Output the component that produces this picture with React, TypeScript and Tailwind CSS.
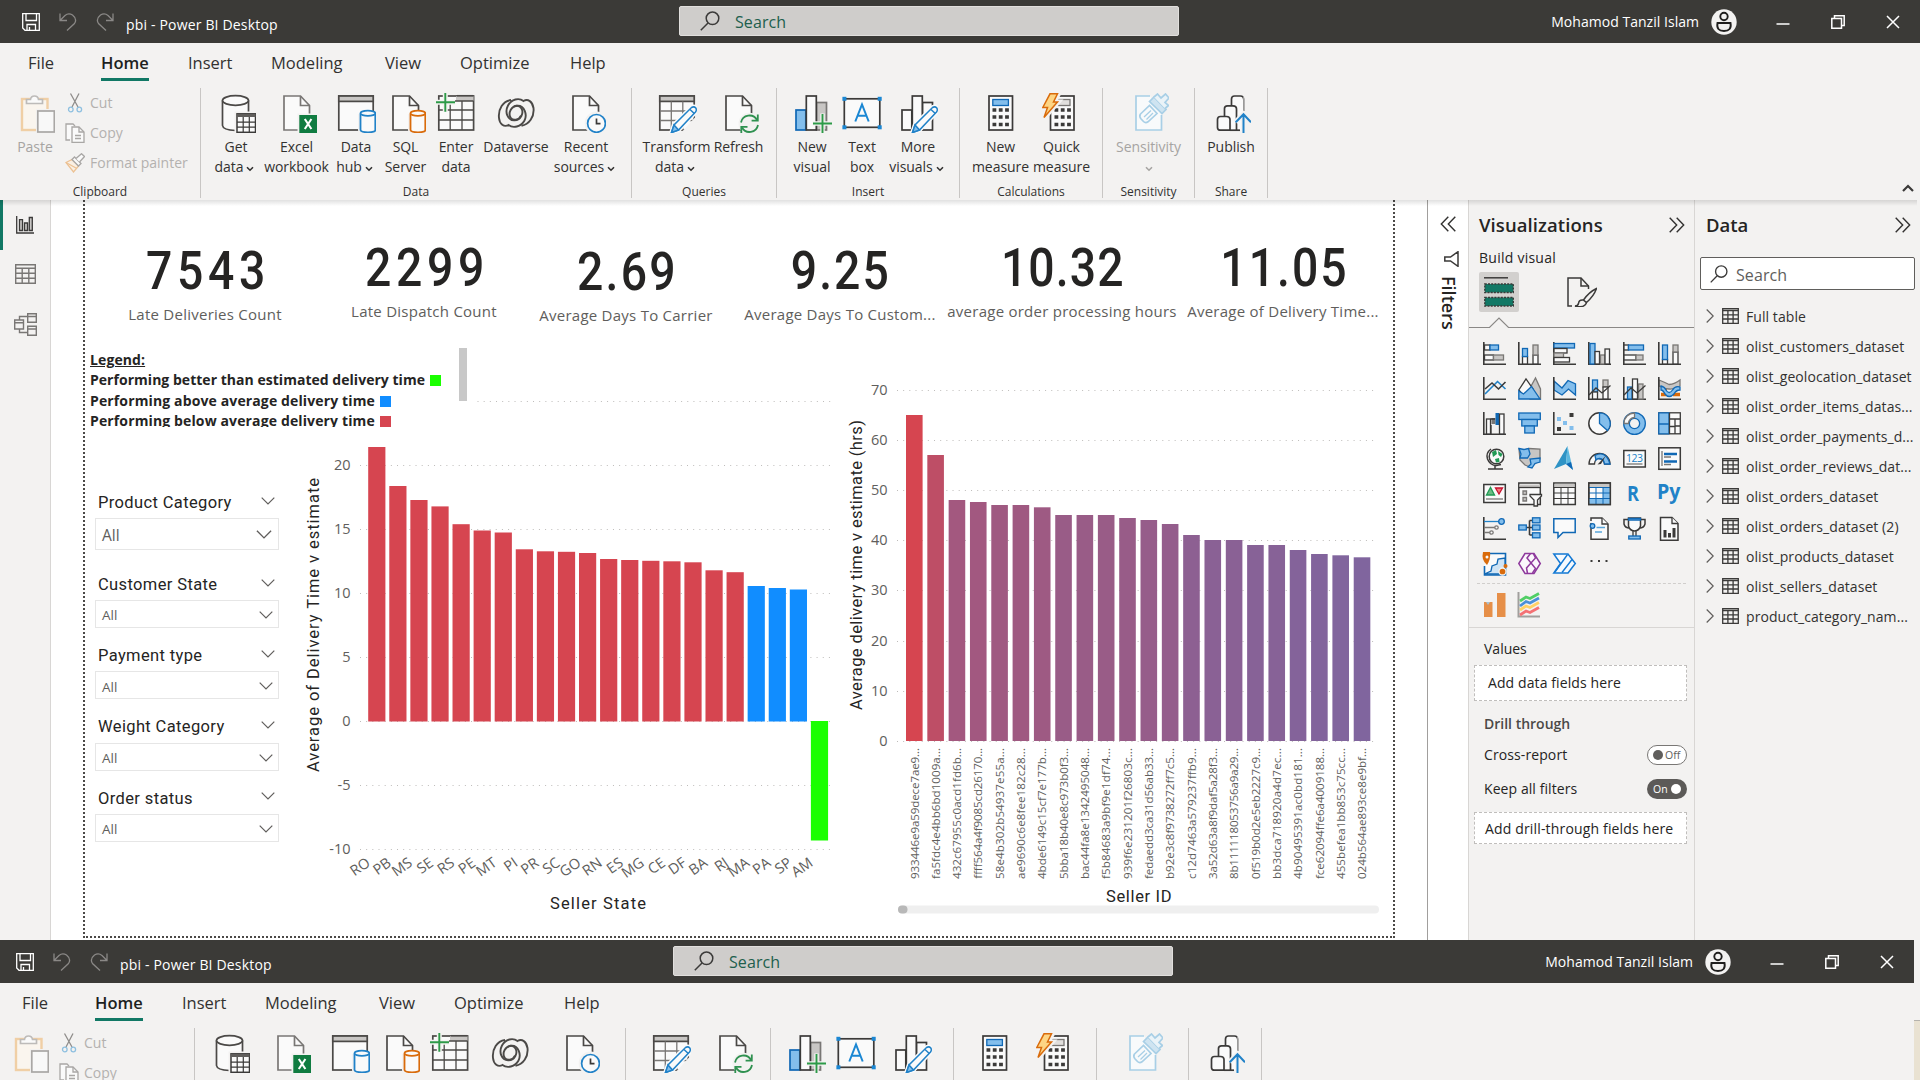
import React from "react";

const INK = "#3b3a39";
const BLUE = "#1068b5";
const SKY = "#83beec";
const GRAY = "#c8c6c4";
const PAPER = "#fafafa";
const MID = "#797775";

/* ---------- ribbon icons, drawn on a 40 x 40 grid ---------- */

type Kids = { children: React.ReactNode };

function Icon40({ children }: Kids) {
  return (
    <svg viewBox="0 0 40 40" className="h-10 w-10 shrink-0" fill="none" strokeWidth="1.7" stroke="#4b4947">
      {children}
    </svg>
  );
}

function Doc({ stroke = "#4b4947" }: { stroke?: string }) {
  return (
    <g stroke={stroke}>
      <path d="M7 3H23.5L32.5 12.5V37H7Z" fill={PAPER} />
      <path d="M23.5 3V12.5H32.5" />
    </g>
  );
}

function Pencil() {
  return (
    <g stroke="#2182c8" strokeWidth="1.5">
      <path d="M14.5 39.5L17 32L34.5 14.5Q37 13 38.8 15Q40 17 38.5 19L21.5 37Z" fill={PAPER} stroke={PAPER} strokeWidth="4.5" />
      <path d="M14.5 39.5L17 32L34.5 14.5Q37 13 38.8 15Q40 17 38.5 19L21.5 37Z" fill={PAPER} />
      <path d="M14.5 39.5L17 32L21.5 37Z" fill={SKY} />
      <path d="M33 16.5L37.3 20.5" />
    </g>
  );
}

function SmallCylinder({ color }: { color: string }) {
  return (
    <g stroke={color} strokeWidth="1.8">
      <path d="M24.5 21V37Q24.5 39.5 32 39.5T39.5 37V21" fill={PAPER} stroke="#f3f2f1" strokeWidth="5" />
      <path d="M24.5 20.5V36.8Q24.5 39.3 32 39.3T39.3 36.8V20.5" fill={PAPER} />
      <ellipse cx="31.9" cy="20.3" rx="7.4" ry="2.6" fill={PAPER} />
    </g>
  );
}

const icons: Record<string, React.ReactNode> = {
  paste: (
    <Icon40>
      <rect x="7" y="6" width="25.5" height="31" stroke="#f0cfa5" strokeWidth="2.4" fill="#faf5ee" />
      <path d="M11.5 10.5V6.5H15.5Q16 3 19.5 3T23.5 6.5H27.5V10.5Z" fill={PAPER} stroke="#bdbbb9" />
      <rect x="21" y="16" width="19" height="24" fill="#f3f2f1" stroke="none" />
      <rect x="22.8" y="18" width="16.5" height="21" fill="#f8f8f8" stroke="#a9a7a5" />
    </Icon40>
  ),
  getData: (
    <Icon40>
      <path d="M6.5 7.5V32.5Q7 37 19.5 37.5Q32 37 32.5 32.5V7.5" fill={PAPER} />
      <ellipse cx="19.5" cy="7.5" rx="13" ry="4.8" fill={PAPER} />
      <rect x="18.5" y="18.5" width="21.5" height="21.5" fill="#f3f2f1" stroke="none" />
      <rect x="21" y="20.8" width="18.5" height="18.5" fill={PAPER} stroke={INK} strokeWidth="1.5" />
      <rect x="21" y="20.8" width="18.5" height="3.2" fill="#605e5c" stroke="none" />
      <path d="M21 29.2H39.5M21 34.2H39.5M27.2 24V39M33.3 24V39" stroke={INK} strokeWidth="1.2" />
    </Icon40>
  ),
  excel: (
    <Icon40>
      <Doc stroke="#797775" />
      <rect x="20.5" y="20.5" width="19.5" height="19.5" fill="#f3f2f1" stroke="none" />
      <rect x="22.3" y="22" width="17.7" height="18" fill="#107c41" stroke="none" />
      <path d="M27.8 26L34.4 36M34.4 26L27.8 36" stroke="#fff" strokeWidth="2.1" />
    </Icon40>
  ),
  dataHub: (
    <Icon40>
      <rect x="2.8" y="3" width="34.4" height="34" fill={PAPER} />
      <rect x="2.8" y="3" width="34.4" height="5.4" fill={GRAY} />
      <SmallCylinder color="#2182c8" />
    </Icon40>
  ),
  sql: (
    <Icon40>
      <Doc />
      <SmallCylinder color="#d96b0b" />
    </Icon40>
  ),
  enterData: (
    <Icon40>
      <rect x="2.8" y="3" width="34.8" height="34" fill={PAPER} />
      <rect x="20" y="3" width="17.6" height="5" fill={GRAY} stroke="none" />
      <path d="M3 17H37.6M3 27H37.6M14.2 8V37M26 8V37M14 8H37.6" strokeWidth="1.3" />
      <path d="M20.5 2.800H37.6" />
      <path d="M0 9.3H19M9.3 0V19" stroke="#f3f2f1" strokeWidth="5" />
      <path d="M0 9.3H19M9.3 0V18.7" stroke="#2d9a48" strokeWidth="1.9" />
    </Icon40>
  ),
  dataverse: (
    <Icon40>
      <path
        d="M15 7C7 8 2 16 3 25C3.500 31 8 34.500 12.500 32C17 35.500 25 34 28.500 27.500C31.500 21.500 28.500 12.500 21.500 12.800C15 13 12 20 14.500 24.500C17 28 23 27.500 25 22.500"
        strokeWidth="1.9"
      />
      <path
        d="M25.500 32.800C33 31.500 38.500 24 37.500 15C36.500 8.500 32 5.500 27.500 8C23 4.500 15.500 6 12 12.500C8.500 19 11.500 27.500 18.500 27.200C25 27 28 20 25.500 15.500C23.500 12.300 20 12.300 18 13.800"
        strokeWidth="1.9"
      />
    </Icon40>
  ),
  recent: (
    <Icon40>
      <Doc />
      <circle cx="30.5" cy="30.4" r="9.300" fill={PAPER} stroke="#f3f2f1" strokeWidth="5" />
      <circle cx="30.5" cy="30.4" r="8.900" fill={PAPER} stroke="#2182c8" />
      <path d="M30.500 25.500V30.700H34.500" stroke={INK} />
    </Icon40>
  ),
  transform: (
    <Icon40>
      <rect x="2.8" y="3" width="34.400" height="34" fill={PAPER} />
      <rect x="2.8" y="3" width="34.400" height="5.400" fill={GRAY} />
      <path d="M3 18H37M3 27.500H37M14.300 8.500V37M25.800 8.500V37" stroke={MID} strokeWidth="1.300" />
      <path d="M22 42L42 20V42Z" fill="#f3f2f1" stroke="none" />
      <Pencil />
    </Icon40>
  ),
  refresh: (
    <Icon40>
      <Doc />
      <circle cx="30.500" cy="30.700" r="11" fill="#f3f2f1" stroke="none" />
      <path d="M22 29.500A8.600 8.600 0 0 1 38 27M39 32A8.600 8.600 0 0 1 23 34.500" stroke="#2f9150" strokeWidth="1.800" />
      <path d="M38.800 21.500V27.700H32.600M22.300 40V33.800H28.500" stroke="#2f9150" strokeWidth="1.800" />
    </Icon40>
  ),
  newVisual: (
    <Icon40>
      <rect x="24.500" y="9.500" width="10" height="27.500" fill={GRAY} stroke={MID} />
      <rect x="4" y="17" width="9.800" height="20" fill={SKY} stroke={BLUE} />
      <rect x="14.300" y="3" width="10" height="34" fill={PAPER} stroke={INK} />
      <path d="M20.500 30.500H40M30.500 20.500V40" stroke="#f3f2f1" strokeWidth="4.500" />
      <path d="M21 30.500H40M30.500 21V40" stroke="#2d9a48" strokeWidth="1.900" />
    </Icon40>
  ),
  textBox: (
    <Icon40>
      <rect x="2.300" y="5.800" width="35.500" height="28.500" fill={PAPER} stroke={INK} />
      <g fill="#1b87d3" stroke="none">
        <rect x="0.400" y="3.800" width="4" height="4" />
        <rect x="35.700" y="3.800" width="4" height="4" />
        <rect x="0.400" y="32.300" width="4" height="4" />
        <rect x="35.700" y="32.300" width="4" height="4" />
      </g>
      <path d="M13.300 28.500L20 11.500L26.700 28.500M15.600 22.800H24.400" stroke="#1b87d3" strokeWidth="2" />
    </Icon40>
  ),
  moreVisuals: (
    <Icon40>
      <rect x="24.500" y="9.500" width="10" height="27.500" fill={PAPER} stroke={INK} />
      <rect x="4" y="17" width="9.800" height="20" fill={PAPER} stroke={INK} />
      <rect x="14.300" y="3" width="10" height="34" fill={PAPER} stroke={INK} />
      <Pencil />
    </Icon40>
  ),
  newMeasure: (
    <Icon40>
      <rect x="8" y="3" width="23.500" height="34" fill={PAPER} stroke={INK} />
      <rect x="11.800" y="6.500" width="15.600" height="6" fill={SKY} stroke={BLUE} strokeWidth="1.300" />
      <path d="M11.500 17H28M11.500 24H28M11.500 31.500H28" stroke={INK} strokeWidth="3.600" strokeDasharray="3.800 2.500" />
    </Icon40>
  ),
  quickMeasure: (
    <Icon40>
      <rect x="8.500" y="3" width="23.500" height="34" fill={PAPER} stroke={INK} />
      <rect x="16" y="6.500" width="12" height="6" fill="#e1dfdd" stroke={MID} strokeWidth="1.300" />
      <path d="M12.500 17H29M12.500 24H29M12.500 31.500H29" stroke={INK} strokeWidth="3.600" strokeDasharray="3.800 2.500" />
      <path d="M8 0.800H16.500L11.800 9H16L2 25L5.500 14.500H0.800Z" fill="#fdd584" stroke="#f3f2f1" strokeWidth="5" />
      <path d="M8 0.800H15.500L11.500 9H15.500L2 24.500L5.500 14.500H0.800Z" fill="#fdd584" stroke="#d96b0b" strokeWidth="1.500" />
    </Icon40>
  ),
  sensitivity: (
    <Icon40>
      <g stroke="#a8cfe6">
        <path d="M21 3H7V37H32.500V22" fill="#f8fafb" />
        <path d="M11.500 21L20.500 12.500L28 20.500L19 28.800Q16.500 30.500 14.500 28.500L11.700 25.500Q10 23 11.500 21Z" fill="#f8fafb" />
        <path d="M15 24L22 17.500M17.500 26.500L24 20" strokeWidth="1.300" />
        <path d="M20.500 8.500L25 4L37 16.500L33 20.500Z" fill="#cfe4f1" />
        <path d="M25 4L28.500 1L32 5L36.500 1L40 5L36 9.500L39.500 12.500L36 15.500" fill="#eaf3f8" />
      </g>
    </Icon40>
  ),
  publish: (
    <Icon40>
      <g stroke={INK} fill={PAPER}>
        <path d="M20.500 16V6Q20.500 3 23.500 3H29.500Q32.500 3 32.500 6V18" />
        <path d="M32.500 3V37H20" stroke="none" />
        <path d="M20.500 37H26V3.500" stroke="none" />
        <path d="M13.500 24V15.500Q13.500 12.800 16.500 12.800H22Q25.500 12.800 25.500 15.800V37" />
        <path d="M9.500 23.500H15.500Q19 23.500 19 26.500V37.200H9.500Q6.500 37.200 6.500 34.500V26.500Q6.500 23.500 9.500 23.500Z" />
        <path d="M19 37.200H29" />
      </g>
      <path d="M32.500 40V21M24.500 29L32.500 21L40.200 29" stroke="#f3f2f1" strokeWidth="5" />
      <path d="M32.500 40V21M24.700 29.300L32.500 21.200L40 29.300" stroke="#2182c8" strokeWidth="2" />
    </Icon40>
  ),
};

/* ---------- ribbon ---------- */

function Caret({ className = "" }: { className?: string }) {
  return (
    <svg viewBox="0 0 8 6" className={"h-[6px] w-2 " + className} fill="none" stroke="currentColor" strokeWidth="1.600">
      <path d="M1 1.200L4 4.200L7 1.200" />
    </svg>
  );
}

type Btn = { icon: string; lines: string[]; w: string; caret?: boolean; faded?: boolean };

function RibbonButton({ icon, lines, w, caret, faded }: Btn) {
  return (
    <div className={"flex shrink-0 flex-col items-center pt-[5px] " + w + (faded ? " text-[#a6a4a2]" : "")}>
      {icons[icon]}
      <div className="mt-1 flex flex-col items-center text-[14px] leading-5 tracking-[-0.05px] whitespace-nowrap">
        <span>{lines[0]}</span>
        <span className={"flex h-5 items-center gap-[3px]" + (lines[1] && caret ? " -ml-[3px]" : "")}>
          {lines[1]}
          {caret && <Caret className="mt-[3px]" />}
        </span>
      </div>
    </div>
  );
}

function Group({ label, w, children }: { label: string; w: string; children: React.ReactNode }) {
  return (
    <div className={"flex h-[110px] shrink-0 flex-col border-r border-[#c8c6c4] " + w}>
      <div className="flex h-[92px] shrink-0 justify-center">{children}</div>
      <div className="-mb-2 text-center text-[12px] leading-6">{label}</div>
    </div>
  );
}

function Ribbon() {
  return (
    <div className="flex pt-px">
      <Group label="Clipboard" w="w-[201px]">
        <div className="flex w-full text-[#b3b1af]">
          <div className="flex w-[55px] pl-[15px]">
            <div className="flex w-10 shrink-0 flex-col items-center pt-[5px] text-[14px] leading-5 text-[#a6a4a2]">
              {icons.paste}
              <span className="mt-1">Paste</span>
            </div>
          </div>
          <div className="flex flex-col text-[14px] leading-[30px]">
            <div className="flex h-[30px] items-center pl-[10px]">
              <svg viewBox="0 0 20 20" className="mr-[5px] h-5 w-5" fill="none" strokeWidth="1.300">
                <path d="M5.500 0.500L13 14M14 0.500L7 14" stroke="#8f8d8b" />
                <circle cx="5.800" cy="16.500" r="2.300" stroke="#8fc0e0" />
                <circle cx="14.300" cy="16.500" r="2.300" stroke="#8fc0e0" />
              </svg>
              Cut
            </div>
            <div className="flex h-[30px] items-center pl-[10px]">
              <svg viewBox="0 0 20 20" className="mr-[5px] h-5 w-5" fill={PAPER} stroke="#a9a7a5" strokeWidth="1.300">
                <path d="M5 17H1V1H8L10 3" />
                <path d="M7 4H14L19 9V19.500H7Z" />
                <path d="M14 4V9H19M10 12.500H16M10 15.500H16" fill="none" />
              </svg>
              Copy
            </div>
            <div className="flex h-[30px] items-center pl-[10px]">
              <svg viewBox="0 0 20 20" className="mr-[5px] h-5 w-5" fill={PAPER} strokeWidth="1.300">
                <path d="M1 9.500L7 6.500L13.500 13L8.500 19Z" stroke="#ecc193" fill="#faf0e4" />
                <path d="M1 9.500L11 15" stroke="#ecc193" />
                <path d="M7 6.500L9.500 4L16 10.500L13.500 13Z" stroke="#a9a7a5" />
                <path d="M11 5.500L16.500 0.700L19.500 3.500L14.500 9" stroke="#a9a7a5" />
              </svg>
              Format painter
            </div>
          </div>
        </div>
      </Group>
      <Group label="Data" w="w-[431px]">
        <RibbonButton icon="getData" lines={["Get", "data"]} caret w="w-[60px]" />
        <RibbonButton icon="excel" lines={["Excel", "workbook"]} w="w-[61px]" />
        <RibbonButton icon="dataHub" lines={["Data", "hub"]} caret w="w-[58px]" />
        <RibbonButton icon="sql" lines={["SQL", "Server"]} w="w-[41px]" />
        <RibbonButton icon="enterData" lines={["Enter", "data"]} w="w-[60px]" />
        <RibbonButton icon="dataverse" lines={["Dataverse"]} w="w-[60px]" />
        <RibbonButton icon="recent" lines={["Recent", "sources"]} caret w="w-[80px]" />
      </Group>
      <Group label="Queries" w="w-[145px]">
        <RibbonButton icon="transform" lines={["Transform", "data"]} caret w="w-[80px]" />
        <RibbonButton icon="refresh" lines={["Refresh"]} w="mr-[11px] w-[44px]" />
      </Group>
      <Group label="Insert" w="w-[183px]">
        <RibbonButton icon="newVisual" lines={["New", "visual"]} w="w-[50px]" />
        <RibbonButton icon="textBox" lines={["Text", "box"]} w="w-[50px]" />
        <RibbonButton icon="moreVisuals" lines={["More", "visuals"]} caret w="w-[62px]" />
      </Group>
      <Group label="Calculations" w="w-[143px]">
        <RibbonButton icon="newMeasure" lines={["New", "measure"]} w="w-[61px]" />
        <RibbonButton icon="quickMeasure" lines={["Quick", "measure"]} w="w-[61px]" />
      </Group>
      <Group label="Sensitivity" w="w-[92px]">
        <RibbonButton icon="sensitivity" lines={["Sensitivity", ""]} caret faded w="w-[91px]" />
      </Group>
      <Group label="Share" w="w-[73px]">
        <RibbonButton icon="publish" lines={["Publish"]} w="w-[72px]" />
      </Group>
      <div className="flex grow items-end justify-end pr-[6px] pb-[6px]">
        <svg viewBox="0 0 12 8" className="h-2 w-3" fill="none" stroke={INK} strokeWidth="2.200">
          <path d="M1 7L6 2L11 7" />
        </svg>
      </div>
    </div>
  );
}

/* ---------- title bar and tabs ---------- */

function Lens({ className, stroke }: { className: string; stroke: string }) {
  return (
    <svg viewBox="0 0 20 20" className={className} fill="none" stroke={stroke} strokeWidth="1.500">
      <circle cx="12.500" cy="7.300" r="6.300" />
      <path d="M8 12L0.800 19.300" />
    </svg>
  );
}

function TitleBar() {
  return (
    <div className="flex h-[43px] shrink-0 bg-[#3b3a37] text-white">
      <div className="flex w-[679px] items-center pl-[22px]">
        <svg viewBox="0 0 18 18" className="h-[18px] w-[18px]" fill="none" stroke="#fff" strokeWidth="1.300">
          <path d="M0.700 0.700H17.300V17.300H3L0.700 15Z" />
          <path d="M4 0.700V7.500H14.500V0.700M5 17.300V11.500H13.500V17.300M7.500 14V17" />
        </svg>
        <svg viewBox="0 0 18 18" className="ml-[19px] h-[18px] w-[18px]" fill="none" stroke="#8a8886" strokeWidth="1.300">
          <path d="M1 0.500V7.500H8M1 7.500L6 2.500Q9.500 -0.500 13.500 2Q18.500 6 15.500 10.500L8 17.500" />
        </svg>
        <svg viewBox="0 0 18 18" className="ml-[19px] h-[18px] w-[18px]" fill="none" stroke="#8a8886" strokeWidth="1.300">
          <path d="M17 0.500V7.500H10M17 7.500L12 2.500Q8.500 -0.500 4.500 2Q-0.500 6 2.500 10.500L10 17.500" />
        </svg>
        <span className="mt-[5px] ml-3 text-[14px] tracking-[0.170px] whitespace-nowrap">pbi - Power BI Desktop</span>
      </div>
      <div className="mt-[6px] flex h-[30px] w-[500px] items-center rounded-[2px] border border-[#e1dfdd] bg-[#cfcdcb] pl-5">
        <Lens className="h-5 w-5" stroke="#3b3a39" />
        <span className="mt-px ml-[15px] text-[16px] tracking-[0.100px] text-[#215f4d]">Search</span>
      </div>
      <div className="flex grow items-center justify-end pr-5">
        <span className="text-[14px] tracking-[0.030px] whitespace-nowrap">Mohamod Tanzil Islam</span>
        <svg viewBox="0 0 26 26" className="ml-3 h-[26px] w-[26px]" fill="none" stroke="#201f1e" strokeWidth="1.900">
          <circle cx="13" cy="13" r="12.700" fill="#f3f2f1" stroke="none" />
          <circle cx="13" cy="7.500" r="3.700" />
          <path d="M6.500 14H19.500Q21 22 13 22T6.500 14Z" />
        </svg>
        <svg viewBox="0 0 14 14" className="ml-[39px] h-[14px] w-[14px]" stroke="#fff" strokeWidth="1.500">
          <path d="M0.500 9H13.500" />
        </svg>
        <svg viewBox="0 0 14 14" className="ml-[41px] h-[14px] w-[14px]" fill="none" stroke="#fff" strokeWidth="1.500">
          <path d="M0.800 3.500H10.500V13.200H0.800ZM3.500 3.500V0.800H13.200V10.500H10.500" />
        </svg>
        <svg viewBox="0 0 14 14" className="ml-[41px] h-[14px] w-[14px]" stroke="#fff" strokeWidth="1.500">
          <path d="M1 1L13 13M13 1L1 13" />
        </svg>
      </div>
    </div>
  );
}

const tabs: [string, string][] = [
  ["File", "w-[73px]"],
  ["Home", "w-[87px]"],
  ["Insert", "w-[83px]"],
  ["Modeling", "w-[114px]"],
  ["View", "w-[75px]"],
  ["Optimize", "w-[110px]"],
  ["Help", "w-[60px]"],
];

function Header() {
  return (
    <div className="h-[200px] shrink-0 bg-[#f3f2f1] text-[#323130]">
      <TitleBar />
      <div className="flex h-[44px] pt-2 pl-7 text-[16.500px] leading-6">
        {tabs.map(([name, w]) => (
          <div key={name} className={"shrink-0 " + w}>
            {name === "Home" ? (
              <span className="inline-block h-[30px] border-b-[3px] border-[#117865] font-semibold text-[#201f1e]">
                Home
              </span>
            ) : (
              name
            )}
          </div>
        ))}
      </div>
      <Ribbon />
    </div>
  );
}

/* ---------- report canvas ---------- */

type Card = { value: string; label: string; box: string; digits: string };

const cards: Card[] = [
  { value: "7543", label: "Late Deliveries Count", box: "w-[240px] pt-[43px]", digits: "tracking-[5.500px] -mr-[5.500px]" },
  { value: "2299", label: "Late Dispatch Count", box: "w-[198px] pt-[40px]", digits: "tracking-[5.500px] -mr-[5.500px]" },
  { value: "2.69", label: "Average Days To Carrier", box: "w-[206px] pt-[44px]", digits: "tracking-[2.700px] -mr-[2.700px]" },
  { value: "9.25", label: "Average Days To Custom...", box: "w-[222px] pt-[43px]", digits: "tracking-[2.400px] -mr-[2.400px]" },
  { value: "10.32", label: "average order processing hours", box: "w-[222px] pt-[40px]", digits: "tracking-[1.300px] -mr-[1.300px]" },
  { value: "11.05", label: "Average of Delivery Time...", box: "w-[220px] pt-[40px]", digits: "tracking-[2.400px] -mr-[2.400px]" },
];

function Chevron({ className }: { className: string }) {
  return (
    <svg viewBox="0 0 14 8" className={className} fill="none" stroke="#605e5c" strokeWidth="1.200">
      <path d="M0.700 0.700L7 7L13.300 0.700" />
    </svg>
  );
}

function Slicer({ title, big }: { title: string; big?: boolean }) {
  return (
    <div className={big ? "h-[82px]" : "h-[71.300px]"}>
      <div className="flex h-[26px] items-center justify-between pr-1 pl-[3px]">
        <span className="font-['Roboto'] text-[16.500px] tracking-[0.370px] text-[#252423]">{title}</span>
        <Chevron className="-mt-[5px] h-2 w-[14px]" />
      </div>
      <div
        className={
          "mt-[2px] flex w-[184px] items-center justify-between border border-[#e6e6e6] pl-[6px] text-[#605e5c] " +
          (big ? "h-8 pr-[6px] text-[15.500px]" : "h-7 pr-[5px] text-[13.500px]")
        }
      >
        <span className={big ? "mt-[4px]" : "mt-[3px]"}>All</span>
        <Chevron className={big ? "h-[9px] w-4" : "mt-[2px] h-2 w-[14px]"} />
      </div>
    </div>
  );
}

const legend: [string, string, string][] = [
  ["Performing better than estimated delivery time", "bg-[#1aff00]", "tracking-[0.030px]"],
  ["Performing above average delivery time", "bg-[#118dff]", "tracking-[0.130px]"],
  ["Performing below average delivery time", "bg-[#d64550]", "tracking-[0.130px]"],
];

const states: [string, number][] = [
  ["RO", 447], ["PB", 486], ["MS", 500], ["SE", 506.4], ["RS", 524.2], ["PE", 530.5], ["MT", 532.5], ["PI", 549.3],
  ["PR", 551.3], ["SC", 551.8], ["GO", 553], ["RN", 559], ["ES", 560], ["MG", 560.8], ["CE", 561.3], ["DF", 562.3],
  ["BA", 570.3], ["RJ", 572.2], ["MA", 586], ["PA", 588], ["SP", 589.5], ["AM", 840.5],
];

const din = "'Roboto', sans-serif";

function StateChart() {
  return (
    <svg viewBox="300 380 540 540" className="h-[540px] w-[540px] shrink-0">
      <g stroke="#bebcba" strokeWidth="1" strokeDasharray="1 5.170">
        <path d="M477.500 401.500H835" />
        {[465.5, 529.5, 593.5, 657.5, 721.5, 785.5, 849.5].map((y) => (
          <path key={y} d={`M360 ${y}H835`} />
        ))}
      </g>
      <g fill="#605e5c" fontSize="14.500" textAnchor="end">
        {["20", "15", "10", "5", "0", "-5", "-10"].map((t, i) => (
          <text key={t} x="350.500" y={470 + i * 64}>
            {t}
          </text>
        ))}
      </g>
      {states.map(([name, y], i) => {
        const x = 368.2 + i * 21.08;
        return (
          <g key={name}>
            {i === 21 ? (
              <rect x={x} y="721" width="17.200" height={y - 721} fill="#1aff00" />
            ) : (
              <rect x={x} y={y} width="17.200" height={721.5 - y} fill={i > 17 ? "#118dff" : "#d64550"} />
            )}
            <text x={x + 3} y="865" transform={`rotate(-35 ${x + 3} 865)`} textAnchor="end" fontSize="14.500" fill="#605e5c">
              {name}
            </text>
          </g>
        );
      })}
      <text x="550" y="909" textLength="96" fontSize="16.500" fontFamily={din} fill="#252423">
        Seller State
      </text>
      <text x="319" y="772" transform="rotate(-90 319 772)" textLength="294" fontSize="16.500" fontFamily={din} fill="#252423">
        Average of Delivery Time v estimate
      </text>
    </svg>
  );
}

const sellers: [string, number, number][] = [
  ["933446e9a59dece7ae9...", 415, 65], ["fa5fdc4e4bb6bd1009a...", 455, 57], ["432c67955c0acd1fd6b...", 500, 48],
  ["ffff564a4f9085cd26170...", 502, 47.7], ["58e4b302b54937e55a...", 505, 47], ["ae9690c6e8fee182c28...", 505, 47],
  ["4bde6149c15cf7e177b...", 507.3, 46.5], ["5bba18b40e8c973b0f3...", 515, 45], ["bac44fa8e1342495048...", 515, 45],
  ["f5b84683a9bf9e1df74...", 515, 45], ["939f6e231201f26803c...", 518, 44.5], ["fedaedd3ca31d56ab33...", 520, 44],
  ["b92e3c8f9738272ff7c5...", 524, 43.3], ["c12d7463a579237ffb9...", 535, 41], ["3a52d63a8f9daf5a28f3...", 540, 40],
  ["8b111118053756a9a29...", 540, 40], ["0f519b0d2e5eb2227c9...", 545, 39], ["bb3dca718920a4d7ec...", 545, 39],
  ["4b90495391ac0bd181...", 550, 38], ["fce62094ffe6a4009188...", 554, 37.3], ["455befea1bb853c75cc...", 555.3, 37],
  ["024b564ae893ce8e9bf...", 557.3, 36.6],
];

function shade(v: number) {
  const t = (65 - v) / (65 - 36.6);
  const mix = (a: number, b: number) => Math.round(a + (b - a) * t);
  return `rgb(${mix(214, 128)},${mix(69, 101)},${mix(80, 158)})`;
}

function SellerChart() {
  return (
    <svg viewBox="840 380 550 540" className="h-[540px] w-[550px] shrink-0">
      <g stroke="#bebcba" strokeWidth="1" strokeDasharray="1 5.170">
        {[0, 1, 2, 3, 4, 5, 6, 7].map((i) => (
          <path key={i} d={`M897 ${390.5 + Math.round(i * 50.1)}H1377`} />
        ))}
      </g>
      <g fill="#605e5c" fontSize="14.500" textAnchor="end">
        {[70, 60, 50, 40, 30, 20, 10, 0].map((t, i) => (
          <text key={t} x="887.500" y={394.8 + i * 50.15}>
            {t}
          </text>
        ))}
      </g>
      {sellers.map(([name, y, v], i) => {
        const x = 906 + i * 21.32;
        return (
          <g key={name}>
            <rect x={x} y={y} width="16.600" height={741 - y} fill={shade(v)} />
            <text
              x={x + 12.5}
              y="879"
              transform={`rotate(-90 ${x + 12.5} 879)`}
              textLength="131"
              fontSize="11.600"
              fill="#605e5c"
            >
              {name}
            </text>
          </g>
        );
      })}
      <text x="1106" y="902" textLength="65.500" fontSize="16.500" fontFamily={din} fill="#252423">
        Seller ID
      </text>
      <text x="861.500" y="710" transform="rotate(-90 861.5 710)" textLength="290" fontSize="16.500" fontFamily={din} fill="#252423">
        Average delivery time v estimate (hrs)
      </text>
      <rect x="898" y="905.500" width="481" height="8" rx="4" fill="#efefef" />
      <rect x="898" y="905.500" width="9.500" height="8" rx="4" fill="#b8b8b8" />
    </svg>
  );
}

function ReportPage() {
  return (
    <div className="relative ml-8 h-[738px] w-[1312px] border-2 border-t-0 border-dotted border-[#4b4947] bg-white">
      <div className="flex h-[145px]">
        {cards.map((c) => (
          <div key={c.label} className={"flex shrink-0 flex-col items-center " + c.box}>
            <span className={"scale-x-[0.85] font-['Roboto'] text-[54.500px] leading-[55px] font-medium text-[#252423] " + c.digits}>
              {c.value}
            </span>
            <span className="mt-1 text-[15px] leading-6 tracking-[0.250px] whitespace-nowrap text-[#605e5c]">{c.label}</span>
          </div>
        ))}
      </div>
      <div className="flex pt-[35px]">
        <div className="w-[215px] shrink-0 pt-[110px] pl-[10px]">
          <div className="w-[184px]">
            <Slicer title="Product Category" big />
            <Slicer title="Customer State" />
            <Slicer title="Payment type" />
            <Slicer title="Weight Category" />
            <Slicer title="Order status" />
          </div>
        </div>
        <StateChart />
        <SellerChart />
      </div>
      <div className="absolute top-[148px] left-0 flex h-[79px] w-[385px] justify-between overflow-hidden bg-white pl-[5px]">
        <div className="pt-[2px] text-[14px] leading-[20.400px] font-bold text-[#252423]">
          <div className="tracking-[0.100px] underline">Legend:</div>
          {legend.map(([text, color, tracking]) => (
            <div key={text} className={"flex items-center whitespace-nowrap " + tracking}>
              {text}
              <span className={"ml-[5px] h-[11px] w-[11px] " + color} />
            </div>
          ))}
        </div>
        <div className="mr-[3px] h-[53px] w-2 bg-[#c8c8c8]" />
      </div>
    </div>
  );
}

function Rail() {
  return (
    <div className="flex w-[51px] shrink-0 flex-col border-r border-[#d8d6d4] bg-[#f3f2f1]">
      <div className="flex h-[50px] items-center border-l-[3px] border-[#117865] pl-[13px]">
        <svg viewBox="0 0 18 18" className="h-[18px] w-[18px]" fill={GRAY} stroke={INK} strokeWidth="1.300">
          <path d="M0.700 0V17H18" fill="none" />
          <path d="M3.500 3.700H6.500V14.500H3.500ZM8.500 7H11.500V14.500H8.500ZM13.300 1.500H16.300V14.500H13.300Z" />
        </svg>
      </div>
      <div className="flex h-[48px] items-center pl-[15px]">
        <svg viewBox="0 0 21 20" className="h-5 w-[21px]" fill="none" stroke={MID} strokeWidth="1.400">
          <path d="M0.700 0.700H20.300V19.300H0.700ZM0.700 4.200H20.300M0.700 9.200H20.300M0.700 14.200H20.300M7.200 4V19M13.800 4V19" />
        </svg>
      </div>
      <div className="flex h-[52px] items-center pl-[14px]">
        <svg viewBox="0 0 23 23" className="h-[23px] w-[23px]" fill="none" stroke={MID} strokeWidth="1.400">
          <path d="M13.700 0.700H22.300V9.300H13.700ZM13.700 3.500H22.300M13.700 13.300H22.300V22.300H13.700ZM13.700 16H22.300M0.700 7H9.500V16H0.700ZM0.700 9.800H9.500" />
          <path d="M5.500 7V3.500H13.700M5.500 16V19.500H13.700" />
        </svg>
      </div>
    </div>
  );
}

/* ---------- side panes ---------- */

function DoubleChevron({ flip }: { flip?: boolean }) {
  return (
    <svg viewBox="0 0 16 16" className={"h-4 w-4 " + (flip ? "-scale-x-100" : "")} fill="none" stroke="#323130" strokeWidth="1.400">
      <path d="M0.700 0.700L7.700 8L0.700 15.300M7.700 0.700L14.700 8L7.700 15.300" />
    </svg>
  );
}

const axes = <path d="M0.800 0V22.200H23" fill="none" stroke={INK} strokeWidth="1.600" />;

const visuals: React.ReactNode[] = [
  <>{axes}<rect x="1.500" y="3" width="5.500" height="5" /><rect x="7" y="3" width="8.500" height="5" fill={SKY} stroke={BLUE} /><rect x="1.500" y="13" width="9" height="5" /><rect x="10.500" y="13" width="10" height="5" fill={GRAY} stroke={MID} /></>,
  <>{axes}<rect x="4.500" y="14.500" width="5" height="7.500" /><rect x="4.500" y="6.500" width="5" height="8" fill={SKY} stroke={BLUE} /><rect x="15" y="13" width="5" height="9" /><rect x="15" y="3" width="5" height="10" fill={GRAY} stroke={MID} /></>,
  <>{axes}<rect x="1" y="1.500" width="20.500" height="4.500" fill={SKY} stroke={BLUE} /><rect x="1" y="6.500" width="13" height="4.500" /><rect x="1" y="11" width="9.500" height="4.500" fill={GRAY} stroke={MID} /><rect x="1" y="15.500" width="15.500" height="4.500" /></>,
  <>{axes}<rect x="2" y="1.500" width="5" height="20.500" fill={SKY} stroke={BLUE} /><rect x="7" y="9.500" width="4.500" height="12.500" /><rect x="12.500" y="13" width="4.500" height="9" fill={GRAY} stroke={MID} /><rect x="17" y="7" width="4.500" height="15" /></>,
  <>{axes}<rect x="1" y="3" width="4.500" height="5" /><rect x="5.500" y="3" width="15" height="5" fill={SKY} stroke={BLUE} /><rect x="1" y="13" width="12" height="5" /><rect x="13" y="13" width="7" height="5" fill={GRAY} stroke={MID} /></>,
  <>{axes}<rect x="4.500" y="17.500" width="5" height="4.500" /><rect x="4.500" y="3" width="5" height="14.500" fill={SKY} stroke={BLUE} /><rect x="15" y="10" width="5" height="12" /><rect x="15" y="3" width="5" height="7" fill={GRAY} stroke={MID} /></>,
  <>{axes}<path d="M2 17L14.500 4.500L22.500 12" fill="none" stroke="#2182c8" strokeWidth="1.600" /><path d="M2 12L9 6L15.500 12L22.500 5" fill="none" strokeWidth="1.600" /></>,
  <><path d="M12 11L17.500 1L22.500 12V22H12Z" fill={GRAY} stroke={MID} /><path d="M0.800 13L8 2L15 12L8 21Z" /><path d="M0.800 14L5.500 17L13.500 9.500L22 22H0.800Z" fill={SKY} stroke={BLUE} /></>,
  <><path d="M1 4L9 11L15 3.500L22.500 7V18L15.500 12L9 18L1 13Z" fill={SKY} stroke={BLUE} />{axes}</>,
  <>{axes}<rect x="4.500" y="3" width="5" height="12" fill={SKY} stroke={BLUE} /><rect x="15" y="3" width="5" height="7" fill={GRAY} stroke={MID} /><rect x="4.500" y="15" width="5" height="7" /><rect x="15" y="10" width="5" height="12" /><path d="M1 18L8 11L14 16L22.500 8.500" fill="none" /></>,
  <>{axes}<rect x="4.500" y="10" width="4.500" height="12" fill={SKY} stroke={BLUE} /><rect x="9.500" y="2" width="5" height="20" /><rect x="15.500" y="7" width="4.500" height="15" fill={GRAY} stroke={MID} /><path d="M1 18L8 11L14 16L22.500 8.500" fill="none" /></>,
  <><path d="M3 11.500H9M15 11.500H22M3 17.500H9M15 17.500H22" stroke="#d96b0b" strokeWidth="3.500" /><path d="M1 3Q6 5 11 7.500Q17 7 22 3V9Q16 12.500 11 12Q6 12 1 9Z" fill={GRAY} stroke={MID} /><path d="M3 9Q7 10 8 13Q11 18 14.500 13Q17 8.500 22 10V13Q18 13 16 17Q11 22 7 17Q5 13 3 13Z" fill={SKY} stroke={BLUE} />{axes}</>,
  <>{axes}<rect x="3.500" y="7" width="4" height="15" /><rect x="8.500" y="6" width="4" height="6" fill={MID} stroke="none" /><rect x="12.500" y="1" width="3.500" height="12" fill={BLUE} stroke="none" /><rect x="16.500" y="2" width="4.500" height="20" /><path d="M7.500 7H12M8 13V22" /></>,
  <g fill={SKY} stroke={BLUE}><rect x="0.800" y="1" width="21.500" height="6.500" /><rect x="3.800" y="7.500" width="15.500" height="6.500" /><rect x="6.800" y="14" width="9.500" height="7" /></g>,
  <>{axes}<g stroke="none"><path d="M4 5H8V9H4ZM10 9H14V13H10ZM16.500 14H20.500V18H16.500Z" fill={SKY} /><path d="M16.500 1H20.500V5H16.500ZM4 15H8V19H4Z" fill={INK} /></g></>,
  <><circle cx="11.500" cy="11.500" r="10.700" strokeWidth="1.500" /><path d="M11.500 0.800A10.700 10.700 0 0 1 19.500 18.600L11.500 11.500Z" fill={SKY} stroke={BLUE} /></>,
  <><circle cx="11.500" cy="11.500" r="8" fill="none" stroke={BLUE} strokeWidth="7" /><circle cx="11.500" cy="11.500" r="8" fill="none" stroke={SKY} strokeWidth="4.400" /><path d="M11.500 1V5.500A6 6 0 0 0 5.500 11.500H1A10.500 10.500 0 0 1 11.500 1Z" stroke={MID} /></>,
  <><rect x="0.800" y="0.800" width="21.500" height="21" /><path d="M0.800 0.800H11V21.800H0.800ZM0.800 12H11" fill={SKY} stroke={BLUE} /><path d="M11.500 7H22M17 7V22M11.500 14.500H17M17 14H22M11.500 1V22" /></>,
  <><circle cx="13.500" cy="9.500" r="7.300" strokeWidth="1.500" /><path d="M9 5L13 3L14 7L10 10ZM15 4L19.500 7L18 10L15.500 8ZM12 12L16 11L16.500 15L13 15.500Z" fill="#219a54" stroke="none" /><path d="M8 2Q2.500 6 4.500 12Q7 18.500 13.500 18.500L18 17.500M12 18.500V22M5 22H20" fill="none" strokeWidth="1.500" /></>,
  <><path d="M1 2L6 3.500L11 1.500L22 2V12L18 16L12 20L7 18L2 13Z" fill={GRAY} stroke={MID} /><path d="M1 1.500L6 2.500L10.500 1.500L12 7L9.500 11H2L3 7Z" fill={SKY} stroke={BLUE} /><path d="M22 11V15L17 16.500L14 21L10 20L13 17L12 12Z" fill={SKY} stroke={BLUE} /></>,
  <g stroke="none"><path d="M14.500 -1L1 22L13 17Z" fill="#2f93c5" /><path d="M14.500 -1L13 17L20 23Z" fill="#5bb8e0" /><path d="M13 17L20 23L18 15Z" fill="#1068b5" /></g>,
  <><path d="M1 17A10.500 10.500 0 0 1 22 17H16.500Q16 12 11.500 11.500T6.500 17Z" /><path d="M7 8.500Q18 3 22 17H16.500Q16 12 11.500 11.500Q9 11.500 8 13Z" fill={SKY} stroke={BLUE} /><path d="M9.500 17.500L18 8.500L13 17Z" fill={INK} stroke="none" /></>,
  <><rect x="0.800" y="3.500" width="21.500" height="16.500" strokeWidth="1.500" /><text x="3" y="14.500" fontSize="10.500" fill="#2182c8" stroke="none" textLength="17">123</text><path d="M3.500 17H19.500" stroke={MID} /></>,
  <><rect x="0.800" y="0.800" width="21.500" height="21.500" strokeWidth="1.500" /><path d="M4 4V19" stroke={MID} /><path d="M6 7H19M6 14.500H19" stroke={BLUE} strokeWidth="2.500" /><path d="M6 10H13M6 17.500H13" stroke={MID} /></>,
  <><rect x="0.800" y="2.500" width="21.500" height="18" strokeWidth="1.500" /><path d="M3.500 13L7.500 5.500L11.500 13Z" fill="#6dbb84" stroke="#219a54" /><path d="M12.500 6L16 12L19.500 6Z" fill="#ef7a7a" stroke="#c8102e" /><path d="M3 17H20" stroke={MID} /></>,
  <><rect x="0.800" y="1" width="21.500" height="21.500" strokeWidth="1.500" /><path d="M1.500 2.500H22V5H1.500Z" fill={GRAY} stroke="none" /><path d="M1 5.500H22" /><path d="M5 9H8.500V12.500H5ZM5 15.500H8.500V19H5Z" fill={GRAY} stroke={MID} /><path d="M12 12.500H23.500V14L19.500 18V24H16V18L12 14Z" /></>,
  <><rect x="0.800" y="1" width="21.500" height="21.500" strokeWidth="1.500" /><rect x="1.500" y="1.800" width="20" height="3.200" fill={GRAY} stroke="none" /><path d="M1 5.500H22M1 11H22M1 16.500H22M8 5.500V22M15 5.500V22" strokeWidth="1" /></>,
  <><rect x="0.800" y="1" width="21.500" height="21.500" strokeWidth="1.500" /><rect x="1.500" y="1.800" width="20" height="3.200" fill={GRAY} stroke="none" /><path d="M15 5.500H22V22H1V16.500H15Z" fill={SKY} stroke="none" /><path d="M1 5.500H22M1 11H22M1 16.500H22M8 5.500V22M15 5.500V22" stroke={BLUE} strokeWidth="1" /><rect x="0.800" y="1" width="21.500" height="21.500" fill="none" strokeWidth="1.500" /></>,
  <text x="4" y="19" fontSize="20.500" fontWeight="700" fill="#2182c8" stroke="none" textLength="12" lengthAdjust="spacingAndGlyphs">R</text>,
  <text x="-1" y="16.500" fontSize="21" fontWeight="700" fill="#2182c8" stroke="none" textLength="23.500" lengthAdjust="spacingAndGlyphs">Py</text>,
  <>{axes}<path d="M1 4.500H16" stroke="#2182c8" /><circle cx="18.500" cy="4.500" r="2.800" fill={SKY} stroke={BLUE} /><path d="M1 10.500H12M1 15.500H7" stroke={MID} /><circle cx="13.500" cy="10.500" r="1.700" stroke={MID} /><circle cx="8.500" cy="15.500" r="1.700" stroke={MID} /></>,
  <><path d="M8 10.500H14M11.500 3.500V18M11.500 3.500H14M11.500 18H14" fill="none" strokeWidth="1.600" /><g fill={SKY} stroke={BLUE}><rect x="0.800" y="8" width="7.500" height="5" /><rect x="14.500" y="0.800" width="7.500" height="5" /><rect x="14.500" y="8" width="7.500" height="5" /><rect x="14.500" y="15.800" width="7.500" height="5" /></g></>,
  <path d="M0.800 1.800H22.200V15.500H10L5 20.500V15.500H0.800Z" stroke="#1068b5" strokeWidth="1.500" />,
  <><path d="M3 1H14L20 7V22.300H3Z" strokeWidth="1.500" /><path d="M14 1V7H20" /><path d="M8.500 10.500H17M7 15H14" stroke="#58a6dc" /><circle cx="4.500" cy="9" r="2.300" fill={SKY} stroke={BLUE} /><path d="M3 4V6" stroke="#f3f2f1" strokeWidth="2" /></>,
  <><path d="M5 2.500H1V7Q2 11 6.500 11M18 2.500H22V7Q21 11 16.500 11" fill="none" strokeWidth="1.500" /><path d="M5.500 1H17.500V9Q16.500 13.500 11.500 14Q6.500 13.500 5.500 9Z" strokeWidth="1.500" /><path d="M5.500 1.300H17.500V3H5.500Z" fill={SKY} stroke={BLUE} /><path d="M10 14V19M13 14V19" /><rect x="5.800" y="19" width="11.500" height="3" fill={SKY} stroke={BLUE} /></>,
  <><path d="M2.500 0.500H14L20 6.500V23.300H2.500Z" strokeWidth="1.500" /><path d="M14 0.500V6.500H20" /><path d="M5.500 13H8.500V20.500H5.500ZM10 16H13V20.500H10ZM14.500 11H17.500V20.500H14.500Z" fill={INK} stroke="none" /></>,
  <><path d="M3 1.500H22.500V23H1.500V14" stroke={BLUE} strokeWidth="1.600" /><path d="M1.500 22L8 19L9 14L14 12L15 7L22 6V22Z" fill="#cfe4f5" stroke={BLUE} /><path d="M0 0H7Q8 7 4 13Q-2 8 0 0Z" fill="#d96b0b" stroke="none" /><circle cx="4" cy="5" r="1.500" stroke="none" /><circle cx="19.500" cy="19.500" r="3.500" fill="#d96b0b" stroke="#f3f2f1" /><circle cx="22.500" cy="14" r="2" fill="#d96b0b" stroke="none" /></>,
  <g fill="#fbf7fc" stroke="#8e3a9d" strokeWidth="1.500"><path d="M7 1.500L0.800 11.500L7 21.500H16L22.300 11.500L16 1.500Z" /><path d="M12.500 1.500L9 6L17.500 16.500L14.500 21M9.500 21.500L8.500 16L17.500 6L15.500 2" fill="none" /></g>,
  <g stroke="#1479d4" fill="#f6fafd" strokeWidth="1.500"><path d="M0.800 2H15L22.300 11.500L15 21H0.800L7.500 11.500Z" /><path d="M14.500 2.500L2 20M19 7.500L9 20.500" fill="none" strokeWidth="1.400" /></g>,
  <g fill={INK} stroke="none"><rect x="2.500" y="8" width="2" height="2" /><rect x="10" y="8" width="2" height="2" /><rect x="17.500" y="8" width="2" height="2" /></g>,
];

function VisualizationsPane() {
  return (
    <div className="flex w-[227px] shrink-0 flex-col border-r border-l border-[#d8d6d4] bg-[#f3f2f1]">
      <div className="flex h-[50px] items-center justify-between pr-[9px] pl-[10px]">
        <span className="text-[18.500px] font-semibold tracking-[0.080px] text-[#252423]">Visualizations</span>
        <DoubleChevron />
      </div>
      <div className="pl-[10px] text-[14px] leading-4 font-medium tracking-[0.250px] text-[#252423]">Build visual</div>
      <div className="mt-[6px] flex gap-[43px] pl-[10px]">
        <div className="flex h-10 w-10 items-center justify-center rounded-[2px] bg-[#d2d0ce]">
          <svg viewBox="0 0 30 30" className="h-[30px] w-[30px]" stroke={INK} fill="#117865">
            <path d="M0 0.800H24" strokeWidth="1.500" />
            <rect x="0.800" y="7" width="28.500" height="8.500" strokeWidth="1.400" strokeDasharray="2 1.200" />
            <rect x="0.800" y="20.500" width="28.500" height="8.500" strokeWidth="1.400" strokeDasharray="2 1.200" />
          </svg>
        </div>
        <svg viewBox="0 0 30 30" className="mt-[5px] ml-[5px] h-[30px] w-[30px]" fill="none" stroke={INK} strokeWidth="1.500">
          <path d="M5 29H1V1H14L21.500 9V12" />
          <path d="M14 1V9H21.500" />
          <path d="M29.500 11.500Q22 15 16.500 23L19.500 25.500Q27 19 29.500 11.500Z" />
          <path d="M16 23Q12 22.500 11.500 26.500Q11 29 8 29Q15 31 18 28Q20 26 19 25" />
        </svg>
      </div>
      <svg viewBox="0 0 225 12" className="mt-[5px] h-3 w-[225px]" fill="none" stroke="#8a8886" strokeWidth="1.200">
        <path d="M0 10.500H20.500L30 1L39.500 10.500H225" />
      </svg>
      <div className="mt-[13px] grid auto-rows-[35px] grid-cols-[repeat(6,35px)] pl-[14px]">
        {visuals.map((v, i) => (
          <svg key={i} viewBox="0 0 24 24" className="h-6 w-6 overflow-visible" fill={PAPER} stroke={INK} strokeWidth="1.300">
            {v}
          </svg>
        ))}
      </div>
      <div className="mx-2 -mt-[4px] border-t border-dashed border-[#d0cecc]" />
      <div className="mt-2 flex gap-[10px] pl-[14px]">
        <svg viewBox="0 0 24 26" className="h-[26px] w-6" fill="#e68f48">
          <path d="M1 10H9.500V25H1ZM14 1H22.500V25H14Z" />
          <path d="M3 10H7L5 13Z" fill="#a9c3d3" />
        </svg>
        <svg viewBox="0 0 24 26" className="h-[26px] w-6" fill="none" strokeWidth="2.800">
          <path d="M1.500 0V24.500H23" stroke="#a19f9d" strokeWidth="2" />
          <path d="M3 9L9 5L13 6.500L22 1.500" stroke="#51cf66" />
          <path d="M3 14L9 9.500L13 11L22 6" stroke="#4a90d9" />
          <path d="M3 18L9 14L13 15.500L22 10.500" stroke="#ffd166" />
          <path d="M3 23L9 19L13 20.500L22 15.500" stroke="#f47174" />
        </svg>
      </div>
      <div className="mt-[9px] border-t border-[#d8d6d4]" />
      <div className="px-[5px] text-[14px] text-[#252423]">
        <div className="mt-[10px] pl-[10px] leading-[22px]">Values</div>
        <div className="mt-[5px] flex h-9 w-[213px] items-center border border-dashed border-[#c0bebc] bg-white pb-[2px] pl-[13px] tracking-[0.100px]">
          Add data fields here
        </div>
        <div className="mt-[12px] pl-[10px] leading-[22px] font-semibold text-[#4b4947]">Drill through</div>
        <div className="mt-[10px] flex h-5 w-[213px] items-center justify-between pl-[10px]">
          <span className="-mt-[2px] tracking-[0.100px]">Cross-report</span>
          <span className="flex h-5 w-10 items-center gap-[2px] rounded-full border border-[#797775] bg-white pl-[5px] text-[10.500px] text-[#605e5c]">
            <span className="h-[10px] w-[10px] rounded-full bg-[#605e5c]" />
            <span className="mt-px">Off</span>
          </span>
        </div>
        <div className="mt-[14px] flex h-5 w-[213px] items-center justify-between pl-[10px]">
          <span className="-mt-[2px] tracking-[0.080px]">Keep all filters</span>
          <span className="flex h-5 w-10 items-center gap-[3px] rounded-full bg-[#5c5a58] pl-[6px] text-[10.500px] text-white">
            <span className="mt-px">On</span>
            <span className="h-[10px] w-[10px] rounded-full bg-white" />
          </span>
        </div>
        <div className="mt-[13px] flex h-8 w-[213px] items-center border border-dashed border-[#c0bebc] bg-white pl-[10px] tracking-[0.160px] whitespace-nowrap">
          Add drill-through fields here
        </div>
      </div>
    </div>
  );
}

const tables = [
  "Full table",
  "olist_customers_dataset",
  "olist_geolocation_dataset",
  "olist_order_items_datas...",
  "olist_order_payments_d...",
  "olist_order_reviews_dat...",
  "olist_orders_dataset",
  "olist_orders_dataset (2)",
  "olist_products_dataset",
  "olist_sellers_dataset",
  "product_category_nam...",
];

function DataPane() {
  return (
    <div className="flex w-[225px] shrink-0 flex-col bg-[#f3f2f1] pl-[5px]">
      <div className="flex h-[50px] items-center justify-between pr-[9px] pl-[6px]">
        <span className="text-[18.500px] font-semibold text-[#252423]">Data</span>
        <DoubleChevron />
      </div>
      <div className="mt-[7px] flex h-[33px] w-[215px] items-center rounded-[2px] border border-[#605e5c] bg-white pl-[9px]">
        <Lens className="h-[18px] w-[18px]" stroke="#3b3a39" />
        <span className="mt-[2px] ml-[8px] text-[16px] tracking-[0.100px] text-[#605e5c]">Search</span>
      </div>
      <div className="mt-[11px]">
        {tables.map((t) => (
          <div key={t} className="flex h-[30px] items-center pl-[6px] text-[14px] whitespace-nowrap">
            <svg viewBox="0 0 8 14" className="h-[14px] w-2" fill="none" stroke="#605e5c" strokeWidth="1.200">
              <path d="M0.700 0.500L7.200 7L0.700 13.500" />
            </svg>
            <svg viewBox="0 0 17 16" className="mr-[7px] ml-[8px] h-4 w-[17px]" fill="none" stroke={INK} strokeWidth="1.300">
              <path d="M0.700 0.700H16.300V15.300H0.700ZM0.700 2.500H16.300M0.700 6.800H16.300M0.700 11H16.300M5.900 3V15M11.100 3V15" />
            </svg>
            <span className="tracking-[0.070px]">{t}</span>
          </div>
        ))}
      </div>
    </div>
  );
}

function Workspace() {
  return (
    <div className="relative flex h-[740px] shrink-0 overflow-hidden bg-white text-[#323130]">
      <Rail />
      <div className="w-[1376px] shrink-0 bg-white">
        <ReportPage />
      </div>
      <div className="flex w-[41px] shrink-0 flex-col items-center border-l border-[#a19f9d] bg-white pt-4">
        <DoubleChevron flip />
        <svg viewBox="0 0 15 16" className="mt-[19px] ml-[6px] h-4 w-[15px]" fill="none" stroke={INK} strokeWidth="1.500">
          <path d="M14 0.700V15.300L6.500 10H0.800V6H6.500Z" />
        </svg>
        <span className="mt-[9px] ml-[2px] text-[18px] leading-5 font-semibold text-[#252423] [writing-mode:vertical-rl]">
          Filters
        </span>
      </div>
      <VisualizationsPane />
      <DataPane />
      <div className="absolute top-0 left-0 h-[6px] w-[1917px] bg-gradient-to-b from-black/12 to-transparent" />
    </div>
  );
}

export default function App() {
  return (
    <div className="flex h-[1080px] w-[1920px] flex-col overflow-hidden bg-[#f3f2f1] font-['Open_Sans','Noto_Sans',sans-serif]">
      <Header />
      <Workspace />
      <div className="flex h-[140px] shrink-0 overflow-hidden">
        <div className="-ml-[6px] w-[1920px] shrink-0">
          <Header />
        </div>
        <div className="flex w-[6px] shrink-0 flex-col pt-20">
          <div className="h-[60px] border-t border-[#b5b3ad] bg-[#e9e2d2]" />
        </div>
      </div>
    </div>
  );
}
